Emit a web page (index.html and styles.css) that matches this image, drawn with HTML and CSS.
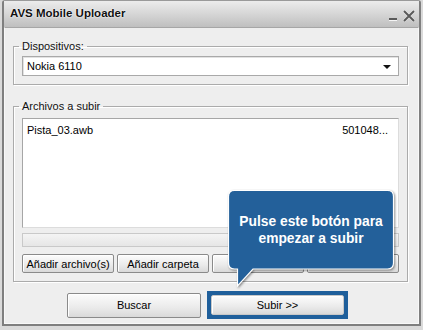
FILE: index.html
```html
<!DOCTYPE html>
<html>
<head>
  <meta charset="utf-8" />
  <title>AVS Mobile Uploader</title>
  <link rel="stylesheet" href="styles.css">
</head>
<body>
  <div class="window">
    <!-- Title bar -->
    <div class="titlebar">
      <span class="title">AVS Mobile Uploader</span>
      <svg class="controls" width="30" height="14" viewBox="0 0 30 14">
        <rect x="1" y="10" width="8" height="2" fill="#fff" opacity="0.8"/>
        <rect x="1" y="9" width="8" height="2" fill="#5a5a5a"/>
        <path d="M16 2 L26 12 M26 2 L16 12" stroke="#fff" stroke-width="3" opacity="0.6"/>
        <path d="M16 2 L26 12 M26 2 L16 12" stroke="#5a5a5a" stroke-width="2"/>
      </svg>
    </div>

    <div class="client">
      <!-- Device selection -->
      <fieldset class="group group-device">
        <legend>Dispositivos:</legend>
        <div class="combo">
          <span>Nokia 6110</span>
          <span class="combo-arrow"></span>
        </div>
      </fieldset>

      <!-- Files -->
      <fieldset class="group group-files">
        <legend>Archivos a subir</legend>
        <div class="filelist">
          <div class="file-row">
            <span>Pista_03.awb</span>
            <span>501048...</span>
          </div>
        </div>
        <div class="progress"></div>
        <div class="file-buttons">
          <button class="btn">Añadir archivo(s)</button>
          <button class="btn">Añadir carpeta</button>
          <button class="btn"></button>
          <button class="btn"></button>
        </div>
      </fieldset>

      <!-- Main actions -->
      <div class="actions">
        <button class="btn btn-main">Buscar</button>
        <div class="highlight">
          <button class="btn btn-upload">Subir &gt;&gt;</button>
        </div>
      </div>

      <!-- Hint balloon -->
      <div class="callout">
        <svg class="callout-shape" width="167" height="98" viewBox="0 0 167 98">
          <path d="M6.5 0.5 H159.5 Q165.5 0.5 165.5 6.5 V73 Q165.5 79 159.5 79 H25 L9.5 96 V79 H6.5 Q0.5 79 0.5 73 V6.5 Q0.5 0.5 6.5 0.5 Z"
                fill="#23609a" stroke="#fff" stroke-width="1.2"/>
        </svg>
        <p class="callout-text">Pulse este botón para<br>empezar a subir</p>
      </div>
    </div>
  </div>
</body>
</html>
```

FILE: styles.css
```css
body {
  margin: 0;
  background: #dadada;
  font-family: "Liberation Sans", Arial, sans-serif;
  font-size: 11px;
  color: #000;
}
.window {
  width: 415px;
  height: 323px;
  margin-left: 2px;
  border: 2px solid #7f7f7f;
  border-top: 1px solid #9a9a9a;
  border-radius: 3px 3px 0 0;
  background: #efefef;
}
.titlebar {
  height: 26px;
  display: flex;
  align-items: center;
  padding: 0 1px 0 6px;
  background: linear-gradient(#ececec, #d8d8d8 45%, #bfbfbf);
}
.title {
  font-weight: bold;
  font-size: 11.5px;
  color: #111;
  text-shadow: 0 0 2px #fff, 0 0 1px #fff;
  margin-top: -2px;
}
.controls {
  margin-left: auto;
  margin-top: 3px;
}
.client {
  position: relative;
  height: 295px;
  border: 1px solid #f8f8f8;
  border-top-color: #a6a6a6;
  background: #eeeeee;
}

/* group boxes */
.group {
  margin: 11px 0 0 8px;
  padding: 3px 8px 8px;
  border: 1px solid #ababab;
  box-shadow: inset 1px 1px 0 #fff, 1px 1px 0 #fff;
  box-sizing: border-box;
}
.group legend {
  padding: 0 3px;
  margin-left: -3px;
  line-height: 14px;
  color: #111;
}
.group-device {
  width: 395px;
}
.group-files {
  width: 395px;
  margin-top: 14px;
  padding-top: 5px;
}
.combo {
  height: 20px;
  box-sizing: border-box;
  display: flex;
  align-items: center;
  justify-content: space-between;
  padding: 0 7px 0 4px;
  background: #fff;
  border: 1px solid #a9a9a9;
  box-shadow: inset 1px 1px 0 #e2e2e2;
}
.combo-arrow {
  width: 0;
  height: 0;
  border-left: 4px solid transparent;
  border-right: 4px solid transparent;
  border-top: 4px solid #111;
  margin-top: 2px;
}
.filelist {
  height: 110px;
  box-sizing: border-box;
  background: #fff;
  border: 1px solid #a6a6a6;
  border-right-color: #dcdcdc;
  border-bottom-color: #dcdcdc;
  padding: 5px 10px 0 4px;
}
.file-row {
  display: flex;
  justify-content: space-between;
}
.progress {
  height: 14px;
  margin-top: 5px;
  box-sizing: border-box;
  border: 1px solid #c9c9c9;
  background: linear-gradient(#f4f4f4, #e6e6e6);
}
.file-buttons {
  display: grid;
  grid-template-columns: repeat(4, 1fr);
  gap: 3px;
  margin-top: 7px;
}
.btn {
  height: 19px;
  padding: 0;
  font-family: "Liberation Sans", Arial, sans-serif;
  font-size: 11px;
  color: #000;
  border: 1px solid #8a8a8a;
  border-radius: 2px;
  background: linear-gradient(#fcfcfc, #eaeaea 60%, #d9d9d9);
  box-shadow: inset 1px 1px 0 #fff;
}

/* bottom buttons */
.actions {
  display: flex;
  align-items: center;
  gap: 6px;
  margin: 9px 0 0 62px;
}
.btn-main {
  width: 134px;
  height: 25px;
}
.highlight {
  width: 141px;
  height: 28px;
  box-sizing: border-box;
  border: 4px solid #1f5f9b;
  background: #1f5f9b;
}
.btn-upload {
  width: 100%;
  height: 100%;
  border-color: #c8c8c8;
}

/* hint balloon */
.callout {
  position: absolute;
  left: 223px;
  top: 162px;
  width: 167px;
  height: 98px;
}
.callout-shape {
  display: block;
  filter: drop-shadow(1px 1px 1px rgba(0, 0, 0, 0.45));
}
.callout-text {
  position: absolute;
  top: 23px;
  left: 0;
  width: 166px;
  margin: 0;
  text-align: center;
  font-weight: bold;
  font-size: 13.8px;
  line-height: 17px;
  color: #fff;
}
```
